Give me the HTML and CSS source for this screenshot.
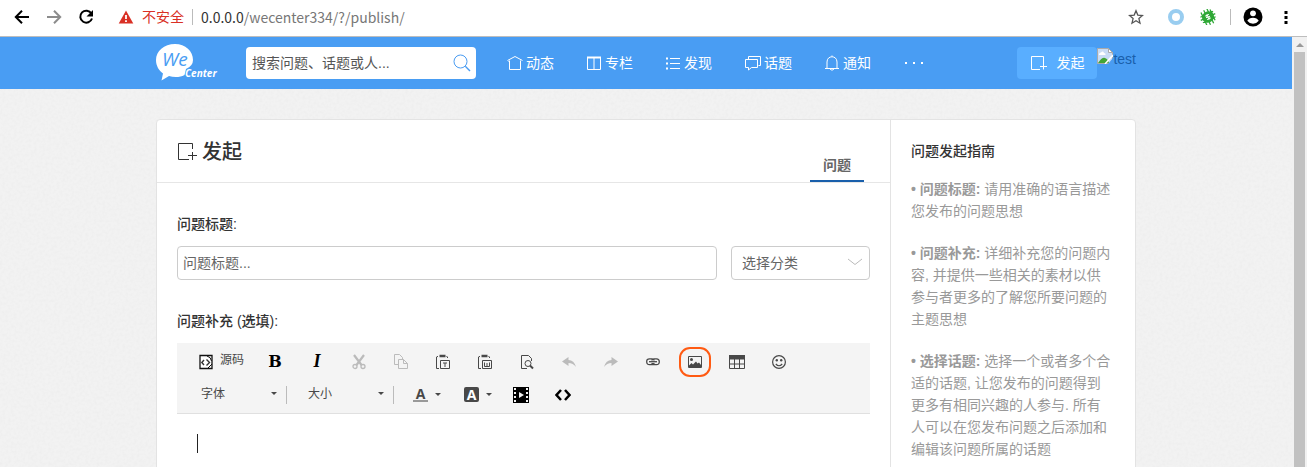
FILE: index.html
```html
<!DOCTYPE html>
<html lang="zh-CN">
<head>
<meta charset="utf-8">
<title>发起 - WeCenter</title>
<link rel="stylesheet" href="styles.css">
</head>
<body>
<div class="browser-bar">
  <button class="bar-btn" aria-label="后退"><svg width="16" height="16" viewBox="0 0 16 16"><path d="M15 8H2.500M8 1.800L1.800 8L8 14.200" fill="none" stroke="#000" stroke-width="2"/></svg></button>
  <button class="bar-btn" aria-label="前进"><svg width="16" height="16" viewBox="0 0 16 16"><path d="M1 8H13.500M8 1.800L14.200 8L8 14.200" fill="none" stroke="#8c8c8c" stroke-width="2"/></svg></button>
  <button class="bar-btn" aria-label="刷新"><svg width="16" height="16" viewBox="0 0 16 16"><path d="M13.400 4.500A6 6 0 1 0 14 9.500" fill="none" stroke="#000" stroke-width="2"/><path d="M15 1v6.500H8.500z" fill="#000"/></svg></button>
  <div class="address">
    <svg width="16" height="14" viewBox="0 0 16 14"><path d="M8 0.500L15.300 13.500H0.700z" fill="#d93025"/><path d="M8 5v4M8 10.200v1.800" stroke="#fff" stroke-width="1.800"/></svg>
    <span class="insecure">不安全</span>
    <span class="bar-line"></span>
    <span class="url"><span class="host">0.0.0.0</span>/wecenter334/?/publish/</span>
  </div>
  <div class="bar-tools">
    <button class="bar-btn" aria-label="收藏"><svg width="16" height="16" viewBox="0 0 16 16"><path d="M8 1.800l1.800 4.300 4.700.4-3.600 3.100 1.100 4.600L8 11.800l-4 2.400 1.100-4.600L1.500 6.500l4.700-.4z" fill="none" stroke="#555" stroke-width="1.300"/></svg></button>
    <svg class="ext-ring" width="16" height="16" viewBox="0 0 16 16"><circle cx="8" cy="8" r="6" fill="none" stroke="#99cdf0" stroke-width="4"/></svg>
    <svg class="ext-bug" width="16" height="16" viewBox="0 0 16 16"><g transform="rotate(-25 8 8)"><path d="M3.500 1v14M7 0v16M10.500 0v16M13 2v12M1 5h14M0 8h16M1 11h14" stroke="#2fa836" stroke-width="1.300"/><ellipse cx="8" cy="8" rx="6.200" ry="5.600" fill="#2fa836"/><path d="M10 6H6.500v2h3v2H6M8 5v6" fill="none" stroke="#fff" stroke-width=".9"/></g></svg>
    <span class="bar-line"></span>
    <button class="bar-btn" aria-label="用户"><svg width="20" height="20" viewBox="0 0 20 20"><circle cx="10" cy="10" r="9.500" fill="#000"/><circle cx="10" cy="6.300" r="2.900" fill="#fff"/><path d="M4.300 13.700Q6 10.800 10 10.800T15.700 13.700Q13.500 16.700 10 16.700T4.300 13.700z" fill="#fff"/></svg></button>
    <button class="bar-btn" aria-label="菜单"><svg width="4" height="16" viewBox="0 0 4 16"><path d="M.5 2h3v3h-3zM.5 7h3v3h-3zM.5 12h3v3h-3z" fill="#000"/></svg></button>
  </div>
</div>

<div class="viewport">
  <div class="page">
    <svg class="grain" width="100%" height="100%" aria-hidden="true"><filter id="grain"><feTurbulence type="fractalNoise" baseFrequency="0.350" numOctaves="2"/><feColorMatrix values="0 0 0 0 0.500  0 0 0 0 0.500  0 0 0 0 0.500  0.150 0 0 0 -0.055"/></filter><rect width="100%" height="100%" filter="url(#grain)"/></svg>
    <header class="top">
      <div class="wrap top-row">
        <a class="logo" href="#" aria-label="WeCenter">
          <svg width="62" height="40" viewBox="0 0 62 40"><path d="M19 1C8 1 0 8 0 17c0 6 3 10.500 7 13.500L5.500 37.500L13 33q3 1 7 1c3 0 6-.5 8.500-2L30 26q7-3 7-9C37 8 29.500 1 19 1z" fill="#fff"/><text x="6" y="23" class="logo-we">We</text><text x="29" y="34" class="logo-center">Center</text></svg>
        </a>
        <form class="search">
          <input type="text" aria-label="搜索" placeholder="搜索问题、话题或人...">
          <button type="button" aria-label="搜索"><svg width="18" height="18" viewBox="0 0 18 18" fill="none" stroke="#4a9cf2"><circle cx="7.500" cy="7.500" r="6.500"/><path d="M12.300 12.300L17 17" stroke-width="1.400"/></svg></button>
        </form>
        <nav class="nav">
          <a href="#"><svg width="16" height="16" viewBox="0 0 16 16"><path d="M.5 5.500L8 1.500L15.500 5.500M2.500 6.500H1.500M2.500 5.500V14.500H13.500V5.500"/></svg>动态</a>
          <a href="#"><svg width="16" height="16" viewBox="0 0 16 16"><path d="M1.500 2.500h13v12h-13zM8 3v11"/><path d="M1 2.500h14" stroke-width="2"/></svg>专栏</a>
          <a href="#"><svg width="16" height="16" viewBox="0 0 16 16"><path d="M5 3.500h10M5 8.500h10M5 13.500h10"/><path d="M1 3.500h2M1 8.500h2M1 13.500h2" stroke-width="2"/></svg>发现</a>
          <a href="#"><svg width="17" height="16" viewBox="0 0 17 16"><path d="M4.500 4V1.500h12v9h-2M1.500 4.500h12v8h-6l-3 2.500v-2.500h-3z"/></svg>话题</a>
          <a href="#"><svg width="16" height="16" viewBox="0 0 16 16"><path d="M8 .5v1M1 13.500h14M3 13.500V7c0-7 10-7 10 0v6.500M6 14q2 2.500 4 0"/></svg>通知</a>
          <a href="#" aria-label="更多"><svg width="22" height="16" viewBox="0 0 22 16"><path d="M2 8h2M10 8h2M18 8h2" stroke-width="2"/></svg></a>
        </nav>
        <a class="publish" href="#"><svg width="18" height="16" viewBox="0 0 18 16"><path d="M13.500 8V1.500H1.500v13H10M13.500 8v6.500M10 11.500h7" /></svg>发起</a>
        <a class="user" href="#"><svg width="16" height="16" viewBox="0 0 16 16"><path d="M.5.500h11l4 4v11H.5z" fill="#c9dcf5" stroke="#aaa"/><path d="M11.500.5v4h4z" fill="#fff" stroke="#aaa"/><path d="M2 6q1-2 2-1.500q2-2 3 .5q2 0 1.500 2H2z" fill="#fff"/><path d="M1 15q4-6 7-5t4 5z" fill="#43a536"/><path d="M11 16L16 10v6z" fill="#4a9cf2"/><path d="M8 16L16 7" stroke="#fff" stroke-width="1.500"/></svg><span>test</span></a>
      </div>
    </header>

    <main class="wrap card">
      <section class="content">
        <div class="title-row">
          <h1><svg width="20" height="20" viewBox="0 0 20 20"><path d="M15.500 7V1.500H1.500v16H12M15.500 10v8M11 13.500h9" fill="none" stroke="#333"/></svg>发起</h1>
          <a class="tab" href="#">问题</a>
        </div>
        <form class="form">
          <label class="label" for="title">问题标题:</label>
          <div class="fields">
            <input class="field" id="title" type="text" placeholder="问题标题...">
            <div class="pick">
              <select class="field" aria-label="分类"><option>选择分类</option></select>
              <svg class="chevron" width="16" height="8" viewBox="0 0 16 8"><path d="M1 1L8 6.500L15 1" fill="none" stroke="#bbb"/></svg>
            </div>
          </div>
          <label class="label" for="detail">问题补充 (选填):</label>
          <div class="toolbar">
            <div class="tools">
              <button type="button" class="tool source"><svg width="14" height="16" viewBox="0 0 14 16"><path d="M1 1.500h12v13H1z" fill="#fff" stroke="#111" stroke-width="1.300"/><path d="M8 2q4 1 4.500 5M9 14l4-4" fill="none" stroke="#111"/><path d="M5 6L2.800 8.500L5 11M7.500 5.500L10.500 8.500L7.500 11.500" fill="none" stroke="#333" stroke-width="1.400"/></svg><span>源码</span></button>
              <button type="button" class="tool bold">B</button>
              <button type="button" class="tool italic">I</button>
              <button type="button" class="tool" aria-label="剪切"><svg width="14" height="16" viewBox="0 0 14 16" fill="none" stroke="#bbb"><path d="M2 1l7.500 10M12 1L4.500 11" stroke-width="2.200"/><circle cx="3" cy="12.500" r="2" stroke-width="1.300"/><circle cx="11" cy="12.500" r="2" stroke-width="1.300"/></svg></button>
              <button type="button" class="tool" aria-label="复制"><svg width="14" height="16" viewBox="0 0 14 16" fill="none" stroke="#bbb"><path d="M4.500 10.500H.5V.5h5l3 3V5M4.500 5.500h5l4 4v5h-9zM9.500 5.500v4h4"/></svg></button>
              <button type="button" class="tool" aria-label="粘贴文本"><svg width="14" height="16" viewBox="0 0 14 16" fill="none" stroke="#484848"><path d="M3 14.500H.5V3q0-.5 1.500-.5M11.500 4V3q0-.5-1-.5M4.500 6.500h9v8h-9zM7 9h4M9 9v4"/><path d="M3.500 2h6" stroke-width="2.500"/></svg></button>
              <button type="button" class="tool" aria-label="从 Word 粘贴"><svg width="14" height="16" viewBox="0 0 14 16" fill="none" stroke="#484848"><path d="M3 14.500H.5V3q0-.5 1.500-.5M11.500 4V3q0-.5-1-.5M4.500 6.500h9v8h-9zM6.500 8.500v4h5v-4M9 9v3"/><path d="M3.500 2h6" stroke-width="2.500"/></svg></button>
              <button type="button" class="tool" aria-label="预览"><svg width="14" height="16" viewBox="0 0 14 16" fill="none" stroke="#484848"><path d="M7 14.500H1.500v-13h7l3 3V7"/><circle cx="8" cy="9.500" r="3"/><path d="M10 11.500l3 3" stroke-width="2"/></svg></button>
              <button type="button" class="tool" aria-label="撤销"><svg width="14" height="14" viewBox="0 0 14 14"><path d="M0 6.500L6.500 2v3Q12 5 14 12Q11 8 6.500 8v3z" fill="#bbb"/></svg></button>
              <button type="button" class="tool" aria-label="重做"><svg width="14" height="14" viewBox="0 0 14 14"><path d="M14 6.500L7.500 2v3Q2 5 0 12Q3 8 7.500 8v3z" fill="#bbb"/></svg></button>
              <button type="button" class="tool" aria-label="链接"><svg width="14" height="8" viewBox="0 0 14 8" fill="none" stroke="#484848"><path d="M8 2.500Q8 .8 6 .8H3.500Q.7 .8 .7 3.700T3.500 6.600H6Q8 6.600 8 5M6 2.500Q6 .8 8 .8h2.500Q13.300 .8 13.300 3.700T10.500 6.600H8Q6 6.600 6 5" stroke-width="1.300"/><path d="M3 3.700h8" stroke-width="1.300"/></svg></button>
              <button type="button" class="tool marked" aria-label="图片"><svg width="14" height="12" viewBox="0 0 14 12"><path d="M.5.500h13v11H.5z" fill="none" stroke="#484848"/><circle cx="3.500" cy="3.500" r="1.500" fill="#484848"/><path d="M1 11V9.500L3.500 7L5 8.500L8 5.500L9.500 7.500L11 6.500L13 9v2z" fill="#484848"/></svg></button>
              <button type="button" class="tool" aria-label="表格"><svg width="16" height="14" viewBox="0 0 16 14"><path d="M.5.500h15v13H.5zM.5 9h15M5.500 4v9.500M10.500 4v9.500" fill="none" stroke="#484848"/><path d="M0 0h16v4.500H0z" fill="#484848"/></svg></button>
              <button type="button" class="tool" aria-label="表情"><svg width="14" height="14" viewBox="0 0 14 14"><circle cx="7" cy="7" r="6.400" fill="none" stroke="#484848" stroke-width="1.200"/><circle cx="4.800" cy="5.300" r="1.200" fill="#484848"/><circle cx="9.200" cy="5.300" r="1.200" fill="#484848"/><path d="M3.800 9q3.200 3.500 6.400 0" fill="none" stroke="#484848" stroke-width="1.200"/></svg></button>
            </div>
            <div class="tools second">
              <button type="button" class="combo">字体<i class="caret"></i></button>
              <span class="sep"></span>
              <button type="button" class="combo">大小<i class="caret"></i></button>
              <span class="sep"></span>
              <button type="button" class="color" aria-label="文本颜色"><span class="ink">A</span><i class="caret"></i></button>
              <button type="button" class="color" aria-label="背景颜色"><span class="paint">A</span><i class="caret"></i></button>
              <button type="button" class="tool film" aria-label="视频"><svg width="16" height="16" viewBox="0 0 16 16"><path d="M0 0h16v16H0z" fill="#000"/><path d="M2 1v14M14 1v14" stroke="#f4f4f4" stroke-width="2" stroke-dasharray="2 2"/><path d="M6 5l5 3-5 3z" fill="#f4f4f4"/></svg></button>
              <button type="button" class="tool" aria-label="代码"><svg width="16" height="12" viewBox="0 0 16 12"><path d="M6 1L1.500 6L6 11M10 1L14.500 6L10 11" fill="none" stroke="#000" stroke-width="2.500"/></svg></button>
            </div>
          </div>
          <div class="edit-area">
            <textarea class="editor" id="detail"></textarea>
            <span class="text-cursor"></span>
          </div>
        </form>
      </section>
      <aside class="guide">
        <h2>问题发起指南</h2>
        <p><b>• 问题标题:</b> 请用准确的语言描述您发布的问题思想</p>
        <p><b>• 问题补充:</b> 详细补充您的问题内容, 并提供一些相关的素材以供参与者更多的了解您所要问题的主题思想</p>
        <p><b>• 选择话题:</b> 选择一个或者多个合适的话题, 让您发布的问题得到更多有相同兴趣的人参与. 所有人可以在您发布问题之后添加和编辑该问题所属的话题</p>
      </aside>
    </main>
  </div>
  <div class="scrollbar" aria-hidden="true"><span class="scroll-up"></span><span class="thumb"></span></div>
</div>
</body>
</html>
```
FILE: styles.css
```css
* { box-sizing: border-box; }
body {
  margin: 0;
  height: 100vh;
  display: flex;
  flex-direction: column;
  overflow: hidden;
  background: #f2f2f2;
  color: #333;
  font: 14px/22px "Liberation Sans", "Noto Sans CJK SC", sans-serif;
}
button, input, select, textarea { font: inherit; color: inherit; margin: 0; }
button { background: none; border: 0; padding: 0; }
a { color: inherit; text-decoration: none; }
svg { display: block; flex: none; }

.browser-bar {
  flex: none;
  height: 37px;
  display: flex;
  align-items: center;
  gap: 16px;
  padding: 0 19px 2px 14px;
  background: #fff;
  border-bottom: 1px solid #bdbdbd;
}
.bar-btn { flex: none; }
.address { flex: 1; display: flex; align-items: center; gap: 8px; padding-left: 8px; }
.insecure { color: #d93025; }
.bar-line { width: 1px; height: 16px; background: #bbb; }
.url { color: #777; font-family: "Noto Sans CJK SC", sans-serif; }
.host { color: #333; }
.bar-tools { display: flex; align-items: center; }
.ext-ring { margin: 0 16px 0 24px; }
.ext-bug { margin-right: 14px; }
.bar-tools .bar-line { margin-right: 12px; }
.bar-tools .bar-line + .bar-btn { margin-right: 21px; }

.viewport { flex: 1; min-height: 0; display: flex; }
.page { flex: 1; min-width: 0; position: relative; overflow: hidden; }
.grain { position: absolute; inset: 0; }
.wrap { width: 100%; max-width: 980px; margin: 0 auto; position: relative; }
.top { position: relative; background: #499df3; color: #fff; }
.top-row { height: 52px; display: flex; align-items: center; }
.logo { width: 90px; }
.logo-we { font: italic 19px "Open Sans", sans-serif; fill: #499df3; }
.logo-center { font: italic bold 10px "Open Sans", sans-serif; fill: #fff; }
.search { width: 230px; height: 32px; display: flex; align-items: center; padding: 0 5px 0 6px; background: #fff; border-radius: 4px; }
.search input { flex: 1; min-width: 0; border: 0; padding: 0; background: none; outline: 0; }
.search input::placeholder { color: #555; }
.nav { flex: 1; display: flex; gap: 32px; padding-left: 31px; }
.nav a { display: flex; align-items: center; gap: 3px; }
.nav svg, .publish svg { fill: none; stroke: #fff; }
.publish { height: 32px; display: flex; align-items: center; gap: 8px; padding: 0 13px; background: #59aeff; border-radius: 4px; }
.user { align-self: flex-start; display: flex; padding-top: 11px; color: #195fab; }

.card { display: flex; margin-top: 30px; height: 100%; background: #fff; border: 1px solid #e3e3e3; border-radius: 4px; }
.content { flex: 1; min-width: 0; }
.title-row { display: flex; justify-content: space-between; align-items: flex-end; height: 63px; padding: 0 26px 0 20px; border-bottom: 1px solid #e6e6e6; }
h1 { align-self: center; display: flex; align-items: center; gap: 5px; margin: 0; padding-top: 2px; font-size: 20px; line-height: 30px; font-weight: 500; }
.tab { padding: 0 13px 4px; border-bottom: 2px solid #195fab; color: #666; font-weight: 700; }
.form { padding: 30px 20px 0; }
.label { display: block; margin-bottom: 11px; font-weight: 500; }
.fields { display: flex; gap: 14px; margin-bottom: 30px; }
.field { width: 100%; height: 34px; border: 1px solid #ccc; border-radius: 4px; background: #fff; padding: 0 5px; outline: 0; }
.fields > .field { flex: 1; min-width: 0; }
.field::placeholder { color: #666; }
.pick { position: relative; width: 139px; }
.pick .field { appearance: none; padding: 0 10px; color: #666; }
.chevron { position: absolute; right: 7px; top: 12px; pointer-events: none; }

.toolbar { padding: 2px 0; background: #f4f4f4; border-bottom: 1px solid #e0e0e0; }
.tools { display: flex; align-items: center; height: 33px; padding-left: 8px; }
.tools.second { padding-left: 3px; }
.tool { position: relative; flex: none; width: 42px; height: 32px; display: flex; align-items: center; justify-content: center; }
.source { width: 69px; gap: 7px; padding-left: 4px; font-size: 12px; color: #484848; }
.source span { padding-bottom: 4px; }
.bold, .italic { font: bold 18px "DejaVu Serif", serif; color: #000; }
.bold { font-size: 16px; }
.italic { font: italic bold 18px "Liberation Serif", serif; }
.marked::after { content: ""; position: absolute; inset: 1px 5px; border: 2px solid #ff5a12; border-radius: 11px; }
.combo { width: 106px; display: flex; align-items: center; justify-content: space-between; padding: 0 9px 2px 21px; font-size: 12px; color: #484848; }
.caret { border: 3px solid transparent; border-top-color: #484848; border-bottom: 0; }
.sep { width: 1px; height: 18px; background: #bbb; }
.color { width: 51px; display: flex; align-items: center; gap: 7px; padding-left: 19px; color: #484848; }
.ink, .paint { width: 15px; height: 15px; font: bold 14px/13px "Open Sans", sans-serif; text-align: center; }
.ink { border-bottom: 2px solid #999; }
.paint { background: #484848; color: #fff; border-radius: 2px; line-height: 15px; }
.film { margin-left: 4px; }
.edit-area { position: relative; }
.editor { display: block; width: 100%; height: 120px; padding: 19px 20px; border: 0; outline: 0; resize: none; }
.text-cursor { position: absolute; left: 20px; top: 20px; width: 1px; height: 19px; background: #222; }

.guide { width: 245px; padding: 20px 24px 0 20px; border-left: 1px solid #e3e3e3; color: #999; }
h2 { margin: 0 0 16px; font-size: 14px; line-height: 22px; font-weight: 500; color: #333; }
.guide p { margin: 0 0 20px; }

.scrollbar { width: 15px; display: flex; flex-direction: column; align-items: center; padding-top: 6px; background: #f1f1f1; }
.scroll-up { border: 4px solid transparent; border-bottom-color: #999; border-top: 0; }
.thumb { width: 11px; flex: 1; margin-top: 5px; background: #c1c1c1; }
```
